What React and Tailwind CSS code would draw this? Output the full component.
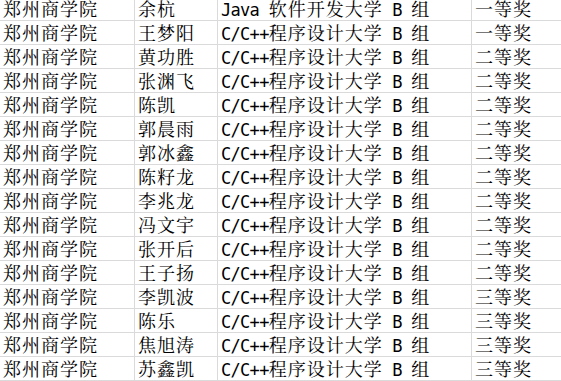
const c3 = 'C/C++程序设计大学 B 组';

const rows = [
  ['余杭', 'Java 软件开发大学 B 组', '一等奖'],
  ['王梦阳', c3, '一等奖'],
  ['黄功胜', c3, '二等奖'],
  ['张渊飞', c3, '二等奖'],
  ['陈凯', c3, '二等奖'],
  ['郭晨雨', c3, '二等奖'],
  ['郭冰鑫', c3, '二等奖'],
  ['陈籽龙', c3, '二等奖'],
  ['李兆龙', c3, '二等奖'],
  ['冯文宇', c3, '二等奖'],
  ['张开后', c3, '二等奖'],
  ['王子扬', c3, '二等奖'],
  ['李凯波', c3, '三等奖'],
  ['陈乐', c3, '三等奖'],
  ['焦旭涛', c3, '三等奖'],
  ['苏鑫凯', c3, '三等奖'],
];

// ascii runs get a half-width mono face, the rest stays CJK
const CellText = ({ text }) => {
  const parts = text.match(/[\x20-\x7e]+|[^\x20-\x7e]+/g) || [];
  return parts.map((p, i) =>
    /^[\x20-\x7e]+$/.test(p) ? (
      <span key={i} className="font-['DejaVu_Sans_Mono',monospace] font-light text-[17px] tracking-[-0.7px] whitespace-pre">
        {p}
      </span>
    ) : (
      <span key={i}>{p}</span>
    )
  );
};

const Cell = ({ children, last }) => (
  <div className={`pl-[3px] h-[23px] leading-[23px] whitespace-nowrap ${last ? '' : 'border-r border-[#dadada]'}`}>
    {children}
  </div>
);

export default function App() {
  return (
    <div className="w-[561px] h-[381px] overflow-hidden bg-white text-black">
      <div className="-mt-[3px] font-['Noto_Serif_CJK_SC','Noto_Sans_CJK_SC',sans-serif] text-[18px] tracking-[1px]">
        {rows.map((r, i) => (
          <div key={i} className="grid grid-cols-[135px_83px_254px_1fr] border-b border-[#dadada]">
            <Cell>郑州商学院</Cell>
            <Cell>{r[0]}</Cell>
            <Cell><CellText text={r[1]} /></Cell>
            <Cell last>{r[2]}</Cell>
          </div>
        ))}
      </div>
    </div>
  );
}
